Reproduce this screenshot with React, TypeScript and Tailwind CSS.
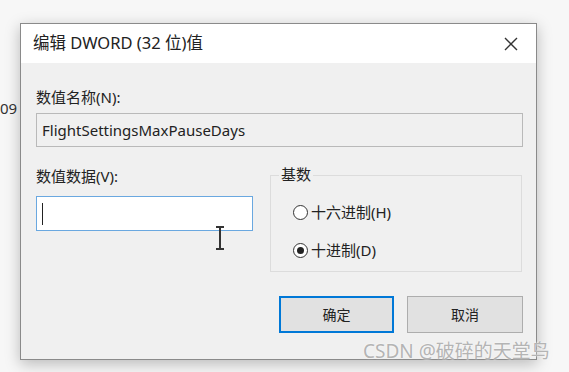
import React from "react";

const font = { fontFamily: '"Noto Sans", "Noto Sans CJK SC", sans-serif' };

function Radio({ checked, label }: { checked?: boolean; label: string }) {
  return (
    <div className="flex items-center gap-[3px] h-[20px]">
      <span className="w-[15px] h-[15px] rounded-full border border-[#333] bg-white flex items-center justify-center">
        {checked && <span className="w-[7px] h-[7px] rounded-full bg-[#222]" />}
      </span>
      <span className="text-[15px] text-[#222] leading-none">{label}</span>
    </div>
  );
}

export default function App() {
  return (
    <div className="w-[569px] h-[372px] bg-[#f7f7f7] relative overflow-hidden" style={font}>
      <div className="flex">
        <div className="w-[20px] pt-[101px] text-[15px] text-[#333] leading-none">09</div>
        <div className="mt-[23px] w-[517px] h-[337px] border border-[#8a8a8a] bg-[#f0f0f0] shadow-[0_4px_14px_rgba(0,0,0,0.25)] flex flex-col">
          <div className="h-[39px] bg-white flex items-center justify-between pl-[12px] pr-[14px]">
            <span className="text-[16.5px] text-[#222]">编辑 DWORD (32 位)值</span>
            <svg width="14" height="14" viewBox="0 0 14 14" className="mr-[4px]">
              <path d="M1 1L13 13M13 1L1 13" stroke="#333" strokeWidth="1.4" />
            </svg>
          </div>
          <div className="pl-[15px] pr-[13px] pt-[27px] flex flex-col">
            <div className="text-[15px] text-[#222] leading-none h-[15px]">数值名称(N):</div>
            <div className="mt-[8px] h-[34px] border border-[#b9b9b9] bg-[#f0f0f0] flex items-center pl-[5px] text-[15px] text-[#222]">
              FlightSettingsMaxPauseDays
            </div>
            <div className="mt-[21px] flex">
              <div className="w-[217px] flex flex-col">
                <div className="pt-[1px] text-[15px] text-[#222] leading-none h-[15px]">数值数据(V):</div>
                <div className="mt-[13px] h-[35px] border border-[#6aa8e0] bg-white flex items-center pl-[5px]">
                  <span className="w-[1px] h-[22px] bg-[#222]" />
                </div>
              </div>
              <div className="ml-[17px] w-[252px] h-[97px] border border-[#dcdcdc] relative mt-[7px] pl-[22px] pt-[26px] flex flex-col gap-[18px]">
                <span className="absolute left-[8px] -top-[9px] bg-[#f0f0f0] px-[2px] text-[15px] text-[#222] leading-none">基数</span>
                <Radio label="十六进制(H)" />
                <Radio checked label="十进制(D)" />
              </div>
            </div>
            <div className="mt-[24px] flex justify-end gap-[13px]">
              <button className="w-[115px] h-[37px] bg-[#e1e1e1] border-2 border-[#0078d7] text-[14px] text-[#222]">确定</button>
              <button className="w-[116px] h-[37px] bg-[#e1e1e1] border border-[#adadad] text-[14px] text-[#222]">取消</button>
            </div>
          </div>
        </div>
      </div>
      <svg width="14" height="24" viewBox="0 0 14 24" className="absolute left-[213px] top-[226px]">
        <path d="M3 1H11M7 1V23M3 23H11" stroke="#333" strokeWidth="2" fill="none" />
      </svg>
      <div className="absolute left-[363px] top-[342px] text-[19px] text-[#b4b4b4] leading-none [text-shadow:0_0_2px_#fff]">
        CSDN @破碎的天堂鸟
      </div>
    </div>
  );
}
